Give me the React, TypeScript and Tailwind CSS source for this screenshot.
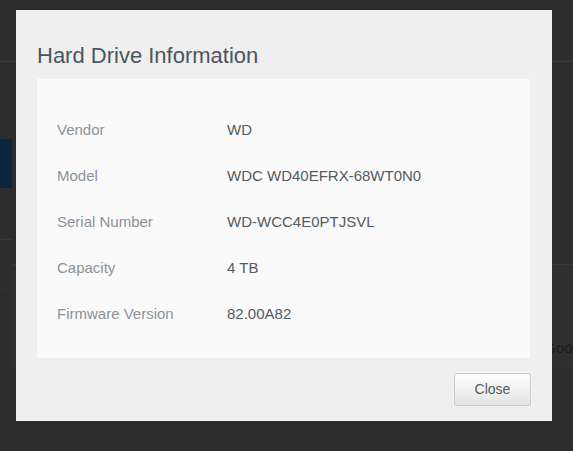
import React from 'react';

const rows = [
  { label: 'Vendor', value: 'WD' },
  { label: 'Model', value: 'WDC WD40EFRX-68WT0N0' },
  { label: 'Serial Number', value: 'WD-WCC4E0PTJSVL' },
  { label: 'Capacity', value: '4 TB' },
  { label: 'Firmware Version', value: '82.00A82' },
];

const App = () => {
  return (
    <div className="relative w-[573px] h-[451px] overflow-hidden bg-[#2d2d2d] font-['Liberation_Sans',Arial,sans-serif]">
      {/* page behind the overlay */}
      <div className="h-[62px] border-b border-[#3a3a3a]" />
      <div className="flex">
        <div className="w-[12px]">
          <div className="mt-[77px] h-[49px] bg-[#0b2540]" />
          <div className="mt-[51px] h-px bg-[#383838]" />
          <div className="mt-[49px] h-px bg-[#333333]" />
        </div>
        <div className="flex-1">
          <div className="mt-[202px] h-[105px] border-t border-[#393939] bg-[#2f2f2f] flex items-end justify-end pb-[12px]">
            <span className="text-[15px] leading-[18px] text-[#1b1b1b] -mr-[8px]">Good</span>
          </div>
        </div>
      </div>

      {/* modal */}
      <div className="absolute left-[16px] top-[10px] w-[536px] h-[411px] bg-[#efefef] border-b border-[#f7f7f7] pt-[33px] px-[21px] flex flex-col">
        <h2 className="text-[22px] leading-[25px] text-[#4b555f]">Hard Drive Information</h2>
        <div className="mt-[11px] mr-[1px] h-[279px] bg-[#fafafa] pt-[28px] pl-[20px]">
          {rows.map((r) => (
            <div key={r.label} className="flex h-[46px] items-center text-[15px]">
              <div className="w-[170px] text-[#8b929a]">{r.label}</div>
              <div className="text-[#545b62]">{r.value}</div>
            </div>
          ))}
        </div>
        <div className="flex justify-end mt-[15px]">
          <button className="w-[77px] h-[33px] border border-[#c9c9c9] rounded-[2px] bg-gradient-to-b from-[#ffffff] to-[#e4e4e4] text-[14px] text-[#555a5f] shadow-[0_0_0_1px_#f5f5f5]">
            Close
          </button>
        </div>
      </div>
    </div>
  );
};

export default App;
